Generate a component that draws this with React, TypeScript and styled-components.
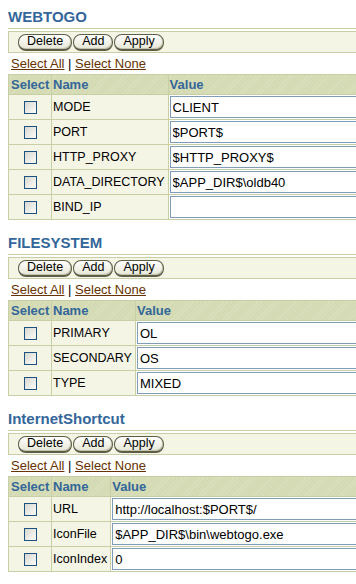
import { FC } from "react";
import styled, { createGlobalStyle } from "styled-components";

type Param = { name: string; value: string };
type Group = { title: string; params: Param[] };

const groups: Group[] = [
    {
        title: "WEBTOGO",
        params: [
            { name: "MODE", value: "CLIENT" },
            { name: "PORT", value: "$PORT$" },
            { name: "HTTP_PROXY", value: "$HTTP_PROXY$" },
            { name: "DATA_DIRECTORY", value: "$APP_DIR$\\oldb40" },
            { name: "BIND_IP", value: "" },
        ],
    },
    {
        title: "FILESYSTEM",
        params: [
            { name: "PRIMARY", value: "OL" },
            { name: "SECONDARY", value: "OS" },
            { name: "TYPE", value: "MIXED" },
        ],
    },
    {
        title: "InternetShortcut",
        params: [
            { name: "URL", value: "http://localhost:$PORT$/" },
            { name: "IconFile", value: "$APP_DIR$\\bin\\webtogo.exe" },
            { name: "IconIndex", value: "0" },
        ],
    },
];

const GroupSection: FC<{ group: Group }> = ({ group }) => {
    return (
        <Section>
            <Title>{group.title}</Title>
            <Toolbar>
                <Button>Delete</Button>
                <Button>Add</Button>
                <Button>Apply</Button>
            </Toolbar>
            <Links>
                <a href="#">Select All</a> | <a href="#">Select None</a>
            </Links>
            <Table>
                <thead>
                    <tr>
                        <SelectHead>Select</SelectHead>
                        <Head>Name</Head>
                        <Head>Value</Head>
                    </tr>
                </thead>
                <tbody>
                    {group.params.map((p) => (
                        <tr key={p.name}>
                            <CheckCell>
                                <Check type="checkbox" />
                            </CheckCell>
                            <NameCell>{p.name}</NameCell>
                            <ValueCell>
                                <ValueInput defaultValue={p.value} />
                            </ValueCell>
                        </tr>
                    ))}
                </tbody>
            </Table>
        </Section>
    );
};

const App: FC = () => {
    return (
        <>
            <GlobalStyle />
            <Page>
                {groups.map((g) => (
                    <GroupSection key={g.title} group={g} />
                ))}
            </Page>
        </>
    );
};

export default App;

const GlobalStyle = createGlobalStyle`
html, body{
    margin:0;
    padding:0;
    overflow:hidden;
    background:#fff;
}
body{
    font-family:"Liberation Sans", Arial, sans-serif;
}
`;

const border = "#c9cfa5";

const Page = styled.main`
width:560px;
padding:8px 0 0 8px;
`;

const Section = styled.section`
margin-bottom:14px;
`;

const Title = styled.h2`
margin:0;
font-size:15px;
font-weight:bold;
line-height:18px;
color:#336699;
padding-bottom:2px;
border-bottom:1px solid ${border};
`;

const Toolbar = styled.div`
margin-top:2px;
height:22px;
box-sizing:border-box;
border:1px solid ${border};
background:#f5f5e5;
display:flex;
align-items:center;
gap:1px;
padding-left:9px;
`;

const Button = styled.button`
height:17px;
box-sizing:border-box;
padding:0 8px;
border:1px solid #5e5e48;
border-bottom-width:2px;
border-radius:8px;
background:linear-gradient(#ffffff, #e6e6d6);
box-shadow:inset -1px -1px 0 #c4c4ae;
font-family:"Liberation Sans", Arial, sans-serif;
font-size:12.5px;
line-height:13px;
color:#000;
`;

const Links = styled.div`
padding:3px 0 2px 3px;
font-size:13px;
line-height:16px;
color:#000;
a{
    color:#663300;
    text-decoration:underline;
}
`;

const Table = styled.table`
border-collapse:collapse;
border:1px solid ${border};
`;

const Head = styled.th`
height:19px;
padding:0 2px 0 1px;
text-align:left;
font-size:13px;
font-weight:bold;
color:#336699;
white-space:nowrap;
border:1px solid ${border};
background:repeating-linear-gradient(135deg, #d3d9b1 0 2px, #dbe1be 2px 3px);
`;

const SelectHead = styled(Head)`
width:40px;
padding:0 0 0 2px;
`;

const Cell = styled.td`
padding:1px;
border:1px solid ${border};
background:#f5f5e6;
vertical-align:middle;
`;

const CheckCell = styled(Cell)`
text-align:center;
`;

const NameCell = styled(Cell)`
padding:0 3px 0 1px;
font-size:12.5px;
color:#000;
white-space:nowrap;
`;

const ValueCell = styled(Cell)`
background:#fff;
`;

const Check = styled.input`
appearance:none;
display:block;
margin:0 auto;
width:13px;
height:13px;
box-sizing:border-box;
border:1px solid #1c5180;
background:linear-gradient(135deg, #d8d8d2, #fbfbf9);
`;

const ValueInput = styled.input`
display:block;
width:320px;
height:22px;
box-sizing:border-box;
margin:0;
padding:0 2px;
border:1px solid #7f9db9;
font-family:"Liberation Sans", Arial, sans-serif;
font-size:13px;
color:#000;
background:#fff;
`;
